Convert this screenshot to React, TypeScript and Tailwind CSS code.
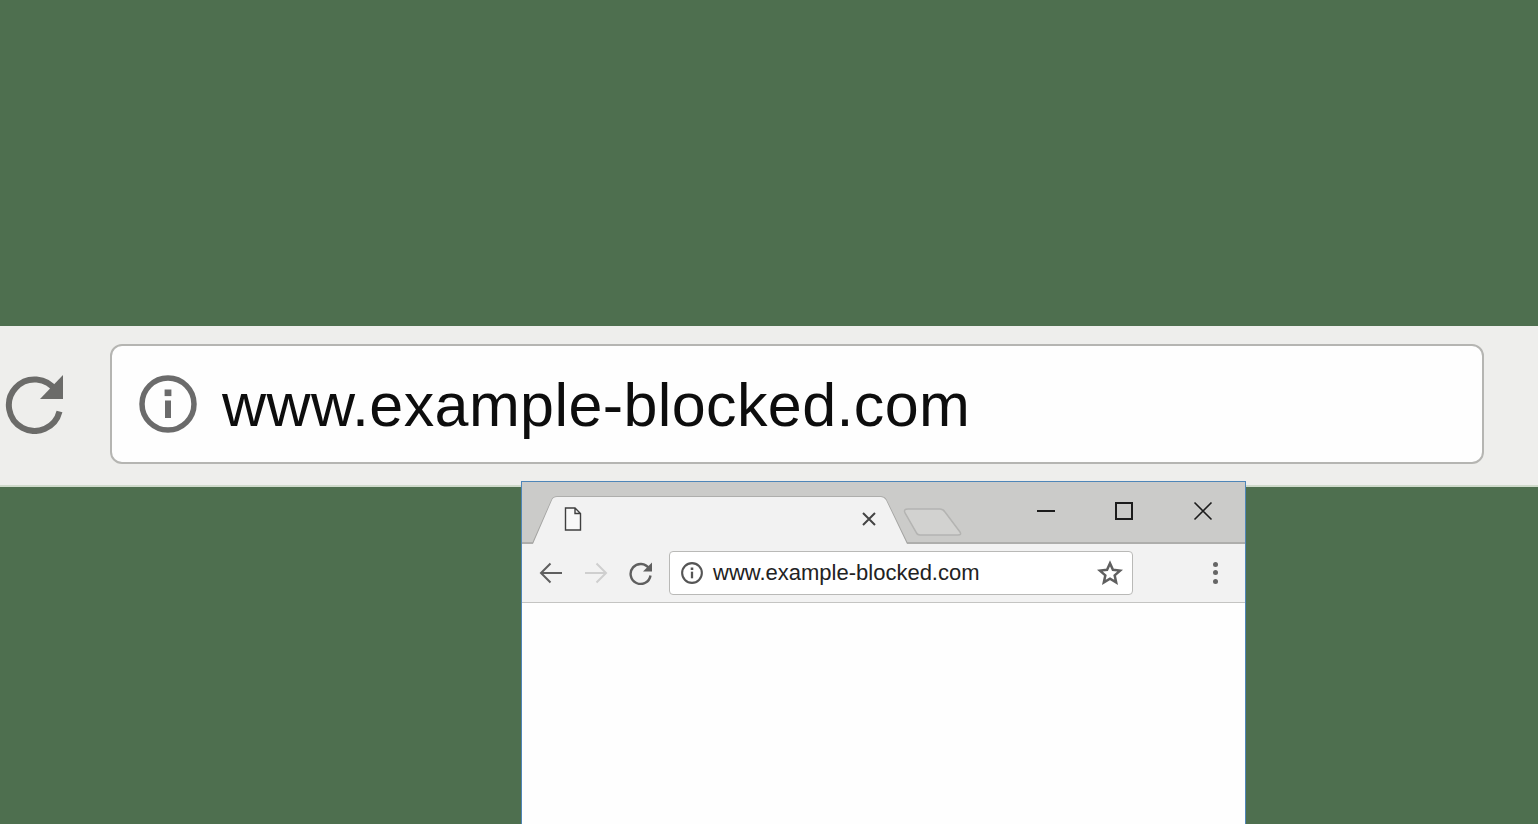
function BigReload() {
  return (
    <svg width="60" height="60" viewBox="0 0 60 60" fill="none" className="shrink-0">
      <path d="M55.5 37.5A25.7 25.7 0 1 1 52 17" stroke="#6b6b69" strokeWidth="6" />
      <path d="M59 1V25H36Z" fill="#6b6b69" />
    </svg>
  );
}

function InfoIcon({ size, color }: { size: number; color: string }) {
  return (
    <svg width={size} height={size} viewBox="0 0 58 58" fill="none" className="shrink-0">
      <circle cx="29" cy="29" r="26" stroke={color} strokeWidth="5.5" />
      <rect x="25.6" y="14.5" width="6.8" height="6.6" fill={color} />
      <rect x="26" y="25.5" width="6" height="17.5" fill={color} />
    </svg>
  );
}

function SmallReload() {
  return (
    <svg width="24" height="24" viewBox="0 0 24 24" fill="none" className="shrink-0">
      <path d="M21.5 14.500A10 10 0 1 1 20 7.500" stroke="#5f5f5f" strokeWidth="2.4" />
      <path d="M23 1.500V10.500H14Z" fill="#5f5f5f" />
    </svg>
  );
}

function Arrow({ color, flip }: { color: string; flip?: boolean }) {
  return (
    <svg width="24" height="22" viewBox="0 0 24 22" fill="none" className={flip ? "shrink-0 -scale-x-100" : "shrink-0"}>
      <path d="M23 11H2M11.500 1.500 2 11l9.500 9.500" stroke={color} strokeWidth="2" />
    </svg>
  );
}

export default function App() {
  return (
    <div className="h-screen overflow-hidden bg-[#4e6f4f] pt-[326px] font-['Liberation_Sans',Arial,sans-serif]">
      {/* zoomed address bar */}
      <div className="flex h-[161px] items-center border-b-2 border-[#cfdacb] bg-[#eeeeec] pb-[3px] pl-[4px]">
        <BigReload />
        <div className="ml-[46px] flex h-[120px] w-[1374px] items-center rounded-[12px] border-2 border-[#b5b5b2] bg-[#fefefe] pl-[27px]">
          <InfoIcon size={58} color="#6b6b6b" />
          <span className="ml-[25px] pt-[3px] text-[61px] leading-none tracking-[0.4px] text-[#0d0d0d]">www.example-blocked.com</span>
        </div>
      </div>

      {/* browser window */}
      <div className="relative -mt-[6px] ml-[521px] flex h-[343px] w-[725px] flex-col border border-b-0 border-[#4f86b8] bg-[#fefefe]">
        <div className="relative flex h-[62px] shrink-0 items-start bg-[#cbcbc9]">
          <svg width="723" height="62" viewBox="0 0 723 62" fill="none" className="absolute inset-0">
            <path d="M0 61H11L30 18Q31 15 35 15H359Q362 15 364 18L385 61H723" stroke="#a5a5a3" strokeWidth="1.5" />
            <path d="M11 62L30 18Q31 15 35 15H359Q362 15 364 18L385 62Z" fill="#f2f2f2" />
            <path d="M386 27H418Q421 27 423 30L438 50Q440 53 436 53H398Q395 53 394 50L383 31Q381 27 386 27Z" fill="#d2d2d0" stroke="#b4b4b2" strokeWidth="1.5" />
          </svg>

          <svg width="18" height="24" viewBox="0 0 18 24" fill="none" className="relative ml-[42px] mt-[25px] shrink-0">
            <path d="M1.500 1H11L16.500 6.500V23H1.500ZM11 1V6.500H16.500" stroke="#3f3f3f" strokeWidth="1.4" fill="#f8f8f8" />
          </svg>
          <svg width="16" height="16" viewBox="0 0 16 16" fill="none" className="relative ml-[279px] mt-[29px] shrink-0">
            <path d="M2 2 14 14M14 2 2 14" stroke="#444444" strokeWidth="2" />
          </svg>

          <svg width="24" height="24" viewBox="0 0 24 24" fill="none" className="relative ml-[157px] mt-[17px] shrink-0">
            <path d="M3 12H21" stroke="#1c1c1c" strokeWidth="2" />
          </svg>
          <svg width="24" height="24" viewBox="0 0 24 24" fill="none" className="relative ml-[54px] mt-[17px] shrink-0">
            <rect x="4" y="4" width="16" height="16" stroke="#1c1c1c" strokeWidth="2" />
          </svg>
          <svg width="24" height="24" viewBox="0 0 24 24" fill="none" className="relative ml-[55px] mt-[17px] shrink-0">
            <path d="M3.500 3.500 20.500 20.500M20.500 3.500 3.500 20.500" stroke="#1c1c1c" strokeWidth="1.6" />
          </svg>
        </div>

        <div className="flex h-[59px] shrink-0 items-center border-b border-[#c4c4c2] bg-[#f2f2f2] pb-[1px] pl-[17px]">
          <Arrow color="#5f5f5f" />
          <div className="ml-[21px]">
            <Arrow color="#cfcfcf" flip />
          </div>
          <div className="ml-[21px]">
            <SmallReload />
          </div>
          <div className="ml-[16px] flex h-[44px] w-[464px] items-center rounded-[4px] border border-[#b9b9b7] bg-white pl-[11px]">
            <InfoIcon size={22} color="#555555" />
            <span className="ml-[10px] pt-[1px] text-[22px] leading-none text-[#222222]">www.example-blocked.com</span>
            <svg width="26" height="26" viewBox="0 0 24 24" fill="none" className="ml-auto mr-[9px] shrink-0">
              <path d="m12 3 2.700 6.100 6.600.7-5 4.400 1.400 6.500L12 17.300l-5.700 3.400 1.400-6.500-5-4.400 6.600-.7Z" stroke="#5f5f5f" strokeWidth="2.300" />
            </svg>
          </div>
          <div className="ml-[80px] flex flex-col gap-[3.500px]">
            <span className="size-[5px] rounded-full bg-[#666666]" />
            <span className="size-[5px] rounded-full bg-[#666666]" />
            <span className="size-[5px] rounded-full bg-[#666666]" />
          </div>
        </div>

        <div className="flex-1 bg-[#fefefe]" />
      </div>
    </div>
  );
}
